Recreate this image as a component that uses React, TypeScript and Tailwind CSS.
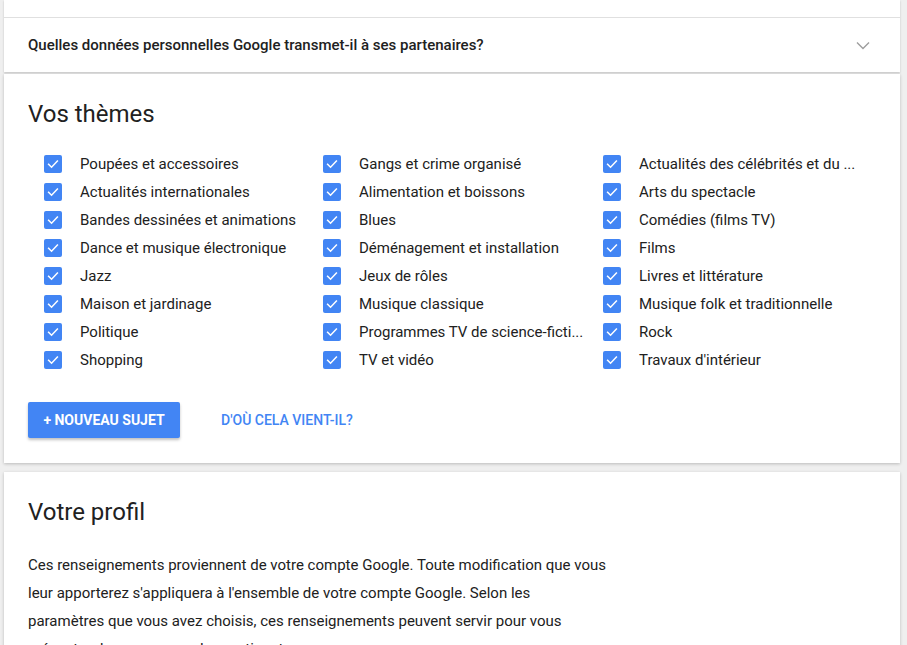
import React from "react";

const col1 = [
  "Poupées et accessoires",
  "Actualités internationales",
  "Bandes dessinées et animations",
  "Dance et musique électronique",
  "Jazz",
  "Maison et jardinage",
  "Politique",
  "Shopping",
];
const col2 = [
  "Gangs et crime organisé",
  "Alimentation et boissons",
  "Blues",
  "Déménagement et installation",
  "Jeux de rôles",
  "Musique classique",
  "Programmes TV de science-ficti...",
  "TV et vidéo",
];
const col3 = [
  "Actualités des célébrités et du ...",
  "Arts du spectacle",
  "Comédies (films TV)",
  "Films",
  "Livres et littérature",
  "Musique folk et traditionnelle",
  "Rock",
  "Travaux d'intérieur",
];

function Check({ label }: { label: string }) {
  return (
    <div className="flex h-[28px] items-center">
      <span className="flex h-[18px] w-[18px] shrink-0 items-center justify-center rounded-[2px] bg-[#4285f4]">
        <svg width="14" height="14" viewBox="0 0 24 24" fill="none">
          <path d="M4.5 12.5l5 5L19.5 7" stroke="#fff" strokeWidth="2.6" strokeLinecap="square" />
        </svg>
      </span>
      <span className="ml-[18px] whitespace-nowrap text-[15px] text-[#212121]">{label}</span>
    </div>
  );
}

export default function App() {
  const cols = [col1, col2, col3];
  return (
    <div
      className="min-h-[645px] w-[907px] overflow-hidden bg-[#efefef] pl-[4px] pr-[7px]"
      style={{ fontFamily: "Roboto, 'Noto Sans', sans-serif" }}
    >
      {/* accordion card */}
      <div className="bg-white shadow-[0_1px_2px_rgba(0,0,0,0.18)]">
        <div className="h-[18px] border-b border-[#e0e0e0]" />
        <div className="flex h-[54px] items-center justify-between pl-[24px] pr-[30px]">
          <span className="text-[15px] font-medium text-[#212121]">
            Quelles données personnelles Google transmet-il à ses partenaires?
          </span>
          <svg width="14" height="9" viewBox="0 0 14 9" fill="none">
            <path d="M1 1.5l6 6 6-6" stroke="#9e9e9e" strokeWidth="1.4" />
          </svg>
        </div>
      </div>

      {/* Vos thèmes */}
      <div className="mt-[2px] bg-white px-[24px] pb-[25px] pt-[24px] shadow-[0_1px_3px_rgba(0,0,0,0.22)]">
        <h2 className="text-[24px] leading-[32px] text-[#212121]">Vos thèmes</h2>
        <div className="mt-[20px] grid grid-cols-[279px_280px_1fr] pl-[16px]">
          {cols.map((c, i) => (
            <div key={i} className="flex flex-col">
              {c.map((l) => (
                <Check key={l} label={l} />
              ))}
            </div>
          ))}
        </div>
        <div className="mt-[28px] flex items-center">
          <button className="h-[36px] w-[152px] rounded-[2px] bg-[#4285f4] text-[14px] font-bold text-white shadow-[0_2px_3px_rgba(0,0,0,0.25)]">
            + NOUVEAU SUJET
          </button>
          <span className="ml-[41px] text-[14px] font-medium text-[#4285f4]">D'OÙ CELA VIENT-IL?</span>
        </div>
      </div>

      {/* Votre profil */}
      <div className="mt-[9px] bg-white px-[24px] pt-[24px] pb-[20px] shadow-[0_1px_3px_rgba(0,0,0,0.22)]">
        <h2 className="text-[24px] leading-[32px] text-[#212121]">Votre profil</h2>
        <p className="mt-[23px] w-[579px] text-[15px] leading-[28px] text-[#212121]">
          Ces renseignements proviennent de votre compte Google. Toute modification que vous leur apporterez
          s'appliquera à l'ensemble de votre compte Google. Selon les paramètres que vous avez choisis, ces
          renseignements peuvent servir pour vous présenter des annonces plus pertinentes.
        </p>
      </div>
    </div>
  );
}
